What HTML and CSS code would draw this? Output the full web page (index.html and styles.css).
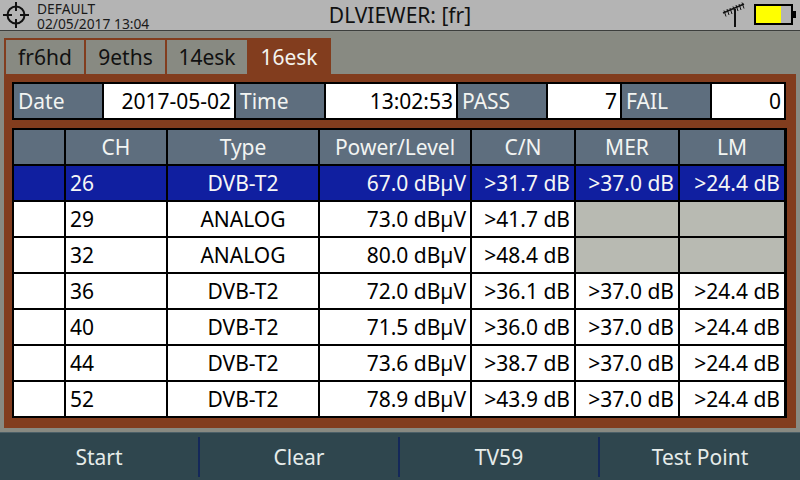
FILE: index.html
```html
<!DOCTYPE html>
<html lang="en">
<head>
<meta charset="utf-8">
<title>DLVIEWER</title>
<link rel="stylesheet" href="styles.css">
</head>
<body>
<header class="topbar">
  <svg class="gps" width="32" height="30" viewBox="0 0 32 30"><circle cx="16" cy="15" r="8.5"/><path d="M3 15h9M20 15h9M16 2v9M16 19v9"/></svg>
  <div class="session"><div>DEFAULT</div><div>02/05/2017 13:04</div></div>
  <div class="title">DLVIEWER: [fr]</div>
  <svg class="antenna" width="26" height="30" viewBox="0 0 26 30"><path class="mast" d="M13 9V27"/><path class="boom" d="M1 13L22 4"/><path class="elems" d="M2 10.500l2 6M5 9l2 6M8 8l2 6M11 6.500l2 6M14 5l2 6M17 4l2 6M20 2.500l2 6"/></svg>
  <div class="battery"><div class="charge"></div></div>
  <div class="nub"></div>
</header>
<main class="workspace">
  <nav class="tabs">
    <div class="tab">fr6hd</div>
    <div class="tab">9eths</div>
    <div class="tab">14esk</div>
    <div class="tab active">16esk</div>
  </nav>
  <section class="panel">
    <div class="summary">
      <div class="lab">Date</div><div class="val">2017-05-02</div>
      <div class="lab">Time</div><div class="val">13:02:53</div>
      <div class="lab">PASS</div><div class="val">7</div>
      <div class="lab">FAIL</div><div class="val">0</div>
    </div>
    <div class="grid">
      <div class="hd"></div><div class="hd">CH</div><div class="hd">Type</div><div class="hd">Power/Level</div><div class="hd">C/N</div><div class="hd">MER</div><div class="hd">LM</div>

      <div class="sel"></div><div class="sel ch">26</div><div class="sel mid">DVB-T2</div><div class="sel num">67.0 dBµV</div><div class="sel num">&gt;31.7 dB</div><div class="sel num">&gt;37.0 dB</div><div class="sel num">&gt;24.4 dB</div>

      <div class="c"></div><div class="c ch">29</div><div class="c mid">ANALOG</div><div class="c num">73.0 dBµV</div><div class="c num">&gt;41.7 dB</div><div class="na"></div><div class="na"></div>

      <div class="c"></div><div class="c ch">32</div><div class="c mid">ANALOG</div><div class="c num">80.0 dBµV</div><div class="c num">&gt;48.4 dB</div><div class="na"></div><div class="na"></div>

      <div class="c"></div><div class="c ch">36</div><div class="c mid">DVB-T2</div><div class="c num">72.0 dBµV</div><div class="c num">&gt;36.1 dB</div><div class="c num">&gt;37.0 dB</div><div class="c num">&gt;24.4 dB</div>

      <div class="c"></div><div class="c ch">40</div><div class="c mid">DVB-T2</div><div class="c num">71.5 dBµV</div><div class="c num">&gt;36.0 dB</div><div class="c num">&gt;37.0 dB</div><div class="c num">&gt;24.4 dB</div>

      <div class="c"></div><div class="c ch">44</div><div class="c mid">DVB-T2</div><div class="c num">73.6 dBµV</div><div class="c num">&gt;38.7 dB</div><div class="c num">&gt;37.0 dB</div><div class="c num">&gt;24.4 dB</div>

      <div class="c"></div><div class="c ch">52</div><div class="c mid">DVB-T2</div><div class="c num">78.9 dBµV</div><div class="c num">&gt;43.9 dB</div><div class="c num">&gt;37.0 dB</div><div class="c num">&gt;24.4 dB</div>
    </div>
  </section>
</main>
<footer class="softkeys">
  <div class="key">Start</div>
  <div class="key">Clear</div>
  <div class="key">TV59</div>
  <div class="key">Test Point</div>
</footer>
</body>
</html>
```
FILE: styles.css
```css
* { box-sizing: border-box; }
html, body { margin: 0; padding: 0; }
body {
  width: 800px; height: 480px; overflow: hidden;
  display: flex; flex-direction: column;
  background: #888a82;
  font-family: "Noto Sans", sans-serif;
  font-size: 21px; color: #000;
}
.topbar {
  height: 32px; flex: none;
  display: flex; align-items: flex-start;
  background: #b4b4b4;
  border-bottom: 1px solid #8a8c86;
  box-shadow: inset 0 -1px 0 #3c3e3c;
  position: relative;
}
.gps { flex: none; }
.gps circle, .gps path { fill: none; stroke: #111; stroke-width: 2; }
.session { width: 248px; flex: none; margin: 1px 0 0 5px; font-size: 13.800px; line-height: 15px; color: #1a1a1a; }
.title { width: 230px; flex: none; margin-top: 1px; line-height: 28px; font-size: 21px; color: #111; text-align: center; white-space: nowrap; }
.antenna { flex: none; margin-left: 207px; }
.antenna path { fill: none; stroke: #111; }
.antenna .mast { stroke-width: 2; }
.antenna .boom { stroke-width: 1.500; }
.antenna .elems { stroke-width: 1; }
.battery {
  width: 39px; height: 21px; flex: none;
  margin: 4px 0 0 6px;
  border: 2px solid #000;
  background: #b4b4b4;
}
.charge { width: 25px; height: 100%; background: #ffff00; }
.nub { width: 3px; height: 7px; margin-top: 11px; background: #000; flex: none; }

.workspace { flex: none; height: 400px; padding: 6px 4px 0; }
.tabs {
  display: flex; gap: 2px;
  width: 327px; height: 36px;
  padding: 2px 0 0 2px;
  background: #823d1e;
}
.tab {
  width: 78px; height: 34px;
  background: #888a82;
  font-size: 21px; line-height: 34px; text-align: center;
  color: #111;
}
.tab:nth-child(2) { width: 79px; }
.tab:nth-child(3) { width: 80px; margin-right: -2px; }
.tab.active { width: 84px; background: #823d1e; color: #f4f4ee; }

.panel {
  width: 792px; height: 354px;
  padding: 8px 8px 0;
  background: #823d1e;
}
.summary {
  display: grid;
  grid-template-columns: 88px 130px 88px 130px 88px 72px 88px 72px;
  gap: 2px;
  width: 774px; height: 38px;
  padding: 2px;
  background: #000;
  grid-auto-rows: 34px;
}
.lab, .hd, .val, .c, .sel, .na { line-height: 34px; white-space: nowrap; font-size: 21px; }
.lab { background: #5e6e7e; color: #f2f4f2; padding-left: 4px; }
.val { background: #fff; color: #000; text-align: right; padding-right: 3px; }

.grid {
  display: grid;
  grid-template-columns: 50px 100px 150px 150px 102px 102px 104px;
  grid-auto-rows: 34px;
  gap: 2px;
  width: 775px; height: 290px;
  margin-top: 8px;
  padding: 2px 3px 2px 2px;
  background: #000;
}
.hd { background: #5e6e7e; color: #f2f4f2; text-align: center; }
.c { background: #fff; color: #000; }
.sel { background: #101fa0; color: #f6f6f6; }
.na { background: #b8bab2; }
.ch { padding-left: 4px; }
.mid { text-align: center; }
.num { text-align: right; padding-right: 4px; }

.softkeys {
  flex: none; height: 48px;
  display: flex; align-items: center;
  background: #2f464e;
  border-top: 1px solid #4c6068;
}
.key {
  width: 200px; height: 40px;
  font-size: 21px; line-height: 40px; text-align: center;
  color: #e6ecea;
  border-right: 2px solid #14285a;
}
.key:last-child { border-right: 0; }
```
